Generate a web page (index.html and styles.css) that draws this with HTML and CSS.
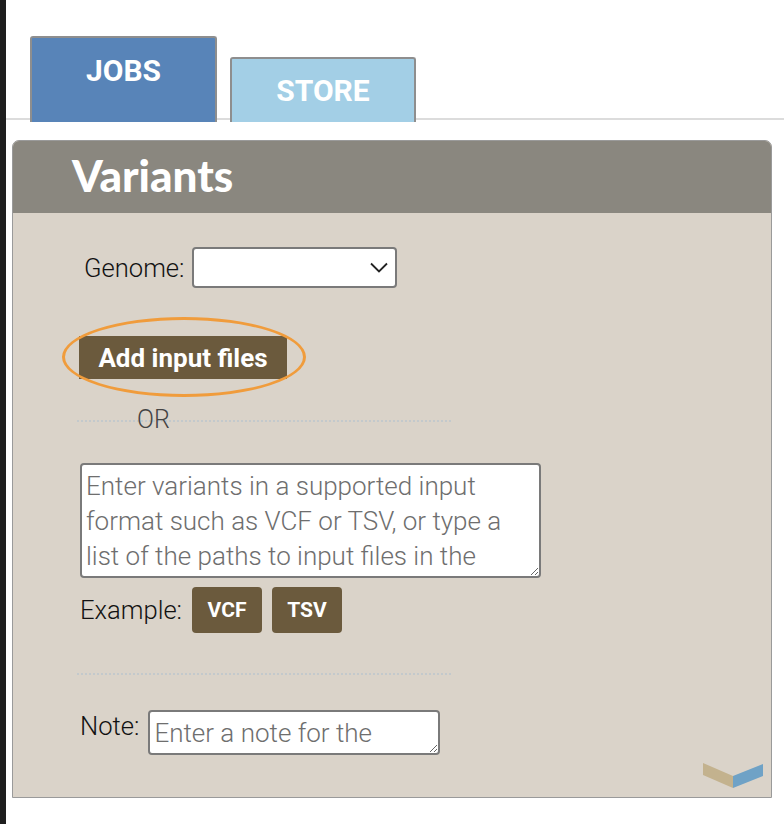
FILE: index.html
```html
<!DOCTYPE html>
<html lang="en">
<head>
<meta charset="utf-8">
<title>Variants</title>
<link rel="stylesheet" href="styles.css">
</head>
<body>
<div class="app">
  <div class="strip"></div>
  <div class="main">
    <nav class="tabs">
      <div class="tab tab-jobs">JOBS</div>
      <div class="tab tab-store">STORE</div>
    </nav>
    <section class="panel">
      <header class="panel-head"><h1 class="panel-title">Variants</h1></header>
      <div class="panel-body">
        <div class="genome-row">
          <label class="label">Genome:</label>
          <div class="select">
            <svg class="select-arrow" width="18" height="11" viewBox="0 0 18 11"><path d="M1 1.5 L9 9.5 L17 1.5" fill="none" stroke="#222" stroke-width="1.8"/></svg>
          </div>
        </div>
        <div class="upload">
          <button class="btn btn-add">Add input files</button>
          <span class="ring"></span>
        </div>
        <div class="or-row"><span class="or-text">OR</span></div>
        <textarea class="variants-input" placeholder="Enter variants in a supported input format such as VCF or TSV, or type a list of the paths to input files in the server"></textarea>
        <div class="example-row">
          <span class="label">Example:</span>
          <button class="btn btn-sm">VCF</button>
          <button class="btn btn-sm">TSV</button>
        </div>
        <div class="rule"></div>
        <div class="note-row">
          <label class="label note-label">Note:</label>
          <textarea class="note-input" placeholder="Enter a note for the analysis job"></textarea>
        </div>
        <div class="foot">
          <svg width="60" height="25" viewBox="0 0 60 25">
            <polygon points="0,0 30,13 30,25 0,12" fill="#c3b28e"/>
            <polygon points="30,13 60,1 60,13 30,25" fill="#6fa2c6"/>
          </svg>
        </div>
      </div>
    </section>
  </div>
</div>
</body>
</html>
```

FILE: styles.css
```css
* { box-sizing: border-box; }
html, body { margin: 0; padding: 0; background: #fff; }
body { font-family: Roboto, "Noto Sans", sans-serif; color: #111; }

.app { display: flex; min-height: 824px; }
.strip { width: 6px; flex: none; background: #1e1e1e; }
.main { flex: 1; padding-top: 36px; }

.tabs {
  display: flex;
  align-items: flex-end;
  gap: 13px;
  height: 86px;
  padding-left: 24px;
  background: linear-gradient(to top, transparent 2px, #dcdcdc 2px, #dcdcdc 4px, transparent 4px);
}
.tab {
  border: 2px solid #8e8e8e;
  border-bottom: none;
  border-radius: 3px 3px 0 0;
  color: #fff;
  font-weight: 700;
  font-size: 30px;
  line-height: 32px;
  text-align: center;
}
.tab-jobs { width: 187px; height: 86px; background: #5884b8; padding-top: 17px; }
.tab-store { width: 186px; height: 65px; background: #a3cfe6; padding-top: 16px; }

.panel {
  margin: 18px 12px 0 6px;
  border: 1px solid #9a9a9a;
  border-radius: 7px 7px 0 0;
  background: #dad3c9;
  overflow: hidden;
}
.panel-head {
  height: 72px;
  background: #8a877f;
  padding: 9px 0 0 59px;
}
.panel-title {
  margin: 0;
  font-family: Lato, "Open Sans", sans-serif;
  font-weight: 900;
  font-size: 44px;
  line-height: 50px;
  color: #fff;
}

.panel-body { padding: 0 8px 9px 0; }

.label { font-size: 25.6px; line-height: 30px; color: #111; font-weight: 300; }

.genome-row {
  display: flex;
  align-items: center;
  gap: 8px;
  margin-top: 34px;
  padding-left: 71px;
}
.select {
  width: 205px;
  height: 41px;
  background: #fff;
  border: 2px solid #7a7a7a;
  border-radius: 4px;
  display: flex;
  align-items: center;
  justify-content: flex-end;
  padding-right: 7px;
}

.upload {
  position: relative;
  display: block;
  width: 208px;
  margin: 48px 0 0 66px;
}
.btn {
  border: none;
  background: #6b5a3d;
  color: #fff;
  font-family: Roboto, "Noto Sans", sans-serif;
  font-weight: 700;
  cursor: pointer;
}
.btn-add {
  display: block;
  width: 208px;
  height: 43px;
  padding: 0;
  font-size: 26px;
  border-radius: 0;
}
.ring {
  position: absolute;
  left: -17px;
  top: -19px;
  width: 244px;
  height: 80px;
  border: 3px solid #f09c3c;
  border-radius: 50%;
  pointer-events: none;
}

.or-row {
  width: 375px;
  height: 28px;
  margin: 27px 0 0 64px;
  background: linear-gradient(90deg, #c3c9cc 50%, transparent 50%) repeat-x 0 14px / 4px 2px;
}
.or-text {
  display: block;
  margin-left: 60px;
  font-size: 25px;
  font-weight: 300;
  line-height: 28px;
  color: #444;
}

textarea {
  font-family: Roboto, "Noto Sans", sans-serif;
  font-size: 26px;
  font-weight: 300;
  line-height: 35px;
  color: #333;
  background: #fff;
  border: 2px solid #7a7a7a;
  border-radius: 4px;
  overflow: hidden;
  display: block;
}
textarea::placeholder { color: #6e6e6e; }

.variants-input {
  width: 461px;
  height: 115px;
  margin: 29px 0 0 67px;
  padding: 4px 20px 0 4px;
}

.example-row {
  display: flex;
  align-items: center;
  gap: 10px;
  margin: 9px 0 0 67px;
}
.btn-sm {
  width: 70px;
  height: 46px;
  padding: 0;
  font-size: 21px;
  border-radius: 4px;
}

.rule {
  width: 375px;
  height: 2px;
  margin: 40px 0 0 64px;
  background: linear-gradient(90deg, #c3c9cc 50%, transparent 50%) repeat-x 0 0 / 4px 2px;
}

.note-row {
  display: flex;
  align-items: flex-start;
  gap: 9px;
  margin: 35px 0 0 67px;
}
.note-label { margin-top: 1px; }
.note-input {
  width: 292px;
  height: 45px;
  padding: 4px 4px 0;
}

.foot {
  display: flex;
  justify-content: flex-end;
  margin-top: 8px;
}
.foot svg { display: block; }
```
